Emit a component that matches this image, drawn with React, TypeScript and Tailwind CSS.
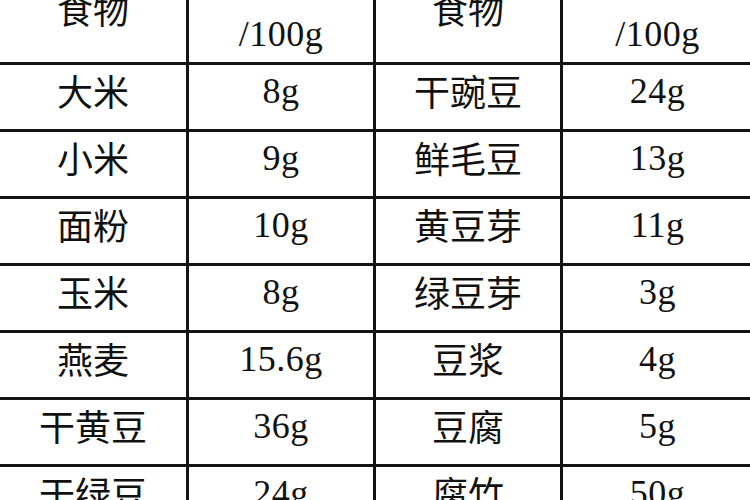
import React from "react";

// rows of the protein table: food, protein per 100g (left pair and right pair)
const rows: [string, string, string, string][] = [
  ["大米", "8g", "干豌豆", "24g"],
  ["小米", "9g", "鲜毛豆", "13g"],
  ["面粉", "10g", "黄豆芽", "11g"],
  ["玉米", "8g", "绿豆芽", "3g"],
  ["燕麦", "15.6g", "豆浆", "4g"],
  ["干黄豆", "36g", "豆腐", "5g"],
  ["干绿豆", "24g", "腐竹", "50g"],
];

const cjk = "font-['Noto_Sans_CJK_SC',sans-serif] text-[36px] leading-[36px] text-[#111]";
const num = "font-['Liberation_Serif',serif] text-[36px] leading-[36px] tracking-[0.5px] text-[#111]";

const widths = ["w-[189px] border-r-[3px]", "w-[187px] border-r-[3px]", "w-[187px] border-r-[3px]", "flex-1"];

function HeaderCell({ idx }: { idx: number }) {
  const food = idx % 2 === 0;
  return (
    <div className={`${widths[idx]} border-[#141414] flex flex-col items-center justify-end ${food ? "pb-[36px]" : "pb-[10px]"}`}>
      {food ? (
        <span className={cjk}>食物</span>
      ) : (
        <>
          <span className={cjk}>蛋白质含量</span>
          <span className={`${num} mt-[40px]`}>/100g</span>
        </>
      )}
    </div>
  );
}

export default function App() {
  return (
    <div className="w-[750px] h-[500px] overflow-hidden bg-white">
      <div className="flex flex-col w-[752px]">
        <div className="flex h-[65px] border-b-[3px] border-[#141414]">
          {[0, 1, 2, 3].map((i) => (
            <HeaderCell key={i} idx={i} />
          ))}
        </div>
        {rows.map((r, ri) => (
          <div key={ri} className="flex h-[67px] shrink-0 border-b-[3px] border-[#141414]">
            {r.map((cell, ci) => (
              <div
                key={ci}
                className={`${widths[ci]} border-[#141414] flex items-center justify-center ${ci % 2 === 0 ? "pb-[14px]" : "pb-[12px]"}`}
              >
                <span className={ci % 2 === 0 ? cjk : num}>{cell}</span>
              </div>
            ))}
          </div>
        ))}
      </div>
    </div>
  );
}
